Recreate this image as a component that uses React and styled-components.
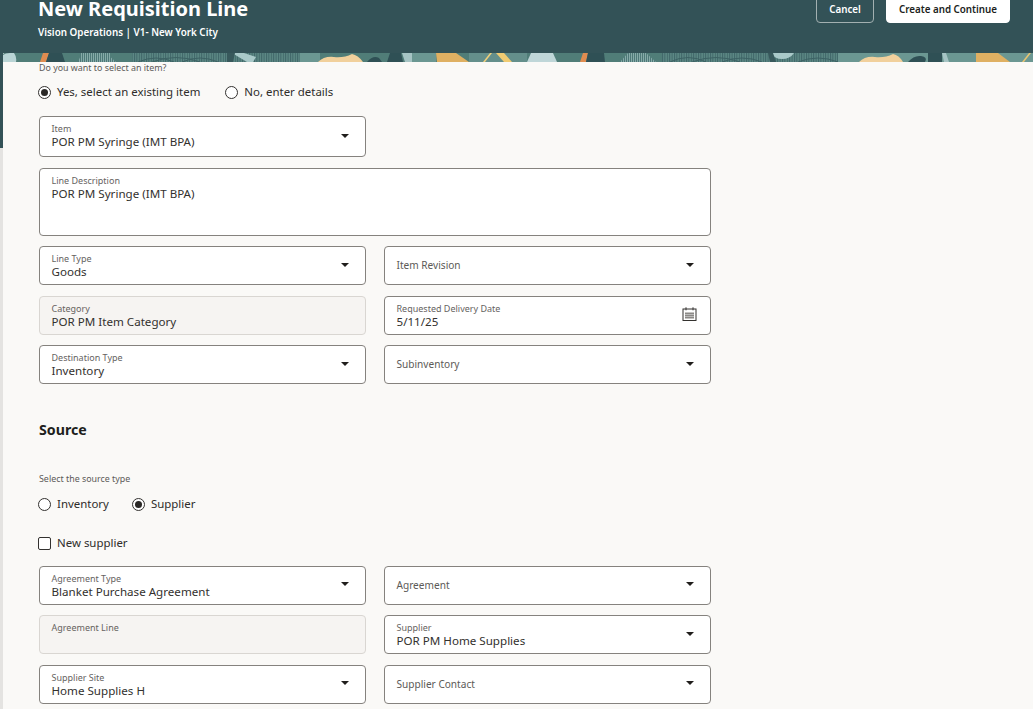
import React from "react";
import styled, { createGlobalStyle } from "styled-components";

const Global = createGlobalStyle`
  html, body { margin: 0; padding: 0; height: 100%; overflow: hidden; background: #e4e3e1; }
  #root { height: 709px; overflow: hidden; }
  * { box-sizing: border-box; }
`;

const FONT = `"Noto Sans", "Open Sans", "Liberation Sans", sans-serif`;

const Page = styled.div`
  position: relative;
  width: 1033px;
  height: 709px;
  overflow: hidden;
  font-family: ${FONT};
  color: #201e1c;
`;

const Hero = styled.header`
  height: 53px;
  background: #335257;
  color: #fff;
  display: flex;
  justify-content: space-between;
  align-items: flex-start;
  padding: 0 23px 0 38px;
  overflow: hidden;
`;

const TitleBlock = styled.div`
  margin-top: -6px;
`;

const Title = styled.h1`
  margin: 0;
  font-size: 20px;
  line-height: 30px;
  font-weight: 700;
`;

const Subtitle = styled.div`
  font-size: 9.85px;
  line-height: 14px;
  font-weight: 600;
  margin-top: 1px;
`;

const Actions = styled.div`
  display: flex;
  gap: 12px;
  margin-top: -4px;
`;

const HeroButton = styled.button`
  height: 27px;
  padding: 0;
  width: ${(p) => p.$w}px;
  border-radius: 4px;
  font-family: ${FONT};
  font-size: 9.8px;
  font-weight: 600;
  border: 1px solid ${(p) => (p.$primary ? "#fff" : "#a3b0b1")};
  background: ${(p) => (p.$primary ? "#fff" : "transparent")};
  color: ${(p) => (p.$primary ? "#201e1c" : "#fff")};
`;

const Body = styled.div`
  display: flex;
  height: 656px;
`;

const Rail = styled.div`
  width: 3px;
  flex: none;
  background: linear-gradient(to bottom, #335257 0, #335257 95px, #e4e3e1 95px);
`;

const Main = styled.main`
  flex: 1;
  min-width: 0;
  background: #faf9f7;
  overflow: hidden;
`;

const StripWrap = styled.div`
  height: 9px;
  margin-left: -1px;
  line-height: 0;
  border-top-left-radius: 4px;
  overflow: hidden;
  background: #5c8a84;
`;

const Form = styled.div`
  padding: 0 0 0 36px;
  width: 708px;
`;

const SmallLabel = styled.div`
  font-size: 8.9px;
  line-height: 12px;
  color: #5c5a57;
  margin-top: ${(p) => p.$top || 0}px;
`;

const RadioRow = styled.div`
  display: flex;
  gap: ${(p) => p.$gap}px;
  margin-top: ${(p) => p.$top}px;
`;

const Choice = styled.label`
  display: flex;
  align-items: center;
  gap: 6px;
  font-size: 11.45px;
  line-height: 18px;
  height: 18px;
  color: #2f2d2b;
`;

const RadioMark = styled.span`
  width: 13px;
  height: 13px;
  margin-left: -1px;
  flex: none;
  border-radius: 50%;
  border: 1px solid #33312f;
  background: #fff;
  display: flex;
  align-items: center;
  justify-content: center;
  &::after {
    content: "";
    width: 7px;
    height: 7px;
    border-radius: 50%;
    background: ${(p) => (p.$on ? "#2a2826" : "transparent")};
  }
`;

const CheckMark = styled.span`
  width: 13px;
  height: 13px;
  margin-left: -1px;
  flex: none;
  border-radius: 2px;
  border: 1px solid #33312f;
  background: #fff;
`;

const Grid = styled.div`
  display: grid;
  grid-template-columns: 327px 327px;
  column-gap: 18px;
  row-gap: 10.5px;
  margin-top: ${(p) => p.$top}px;
`;

const Field = styled.div`
  grid-column: ${(p) => (p.$wide ? "1 / -1" : "auto")};
  position: relative;
  height: ${(p) => p.$h || 39}px;
  border-radius: 4px;
  border: 1px solid ${(p) => (p.$disabled ? "#d9d6d2" : "#85827e")};
  background: ${(p) => (p.$disabled ? "#f6f4f2" : "#fff")};
  padding: 6px 40px 0 11.5px;
`;

const FieldLabel = styled.div`
  font-size: 9px;
  line-height: 11px;
  color: #66635f;
`;

const EmptyLabel = styled.div`
  font-size: 10.1px;
  line-height: 37px;
  margin-top: -6px;
  color: #5c5a57;
`;

const FieldValue = styled.div`
  font-size: 11.6px;
  line-height: 15px;
  color: #33312e;
  white-space: nowrap;
`;

const FieldIcon = styled.span`
  position: absolute;
  right: ${(p) => p.$right || 16}px;
  top: 50%;
  transform: translateY(-50%);
  display: flex;
  margin-top: ${(p) => p.$dy || -1}px;
`;

const SectionTitle = styled.h2`
  margin: 36px 0 0;
  font-size: 14.2px;
  line-height: 20px;
  font-weight: 700;
  color: #201e1c;
`;

const Caret = () => (
  <FieldIcon>
    <svg width="8" height="4" viewBox="0 0 8 4">
      <path d="M0 0h8L4 4z" fill="#201e1c" />
    </svg>
  </FieldIcon>
);

const Calendar = () => (
  <FieldIcon $dy={0} $right={13}>
    <svg width="15" height="15" viewBox="0 0 15 15" fill="none">
      <rect x="1" y="2.5" width="13" height="11.5" stroke="#33312e" />
      <path d="M4 .8v3M11 .8v3" stroke="#33312e" />
      <rect x="3" y="6" width="9" height="6" fill="#8b8986" />
      <path d="M3 8h9M3 10h9" stroke="#ddd" strokeWidth=".6" />
    </svg>
  </FieldIcon>
);

function Select({ label, value, h, wide }) {
  return (
    <Field $h={h} $wide={wide}>
      {value ? (
        <>
          <FieldLabel>{label}</FieldLabel>
          <FieldValue>{value}</FieldValue>
        </>
      ) : (
        <EmptyLabel>{label}</EmptyLabel>
      )}
      <Caret />
    </Field>
  );
}

function Strip() {
  return (
    <svg width="1031" height="9" viewBox="0 0 1031 9" preserveAspectRatio="none">
      <defs>
        <pattern id="hatch" width="2.4" height="3" patternUnits="userSpaceOnUse">
          <rect width="2.4" height="3" fill="#5d8985" />
          <rect width="1" height="3" fill="#3f6668" />
        </pattern>
        <pattern id="hatchLight" width="2" height="3" patternUnits="userSpaceOnUse">
          <rect width="2" height="3" fill="#86aaa8" />
          <rect width="1" height="3" fill="#4d7877" />
        </pattern>
      </defs>
      <rect width="1031" height="9" fill="#507d78" />
      <path d="M0 9V3Q2 0 8 0h4q3 4 2 9z" fill="#b9d4d5" />
      <path d="M38 9 41 0h6l-3 9z" fill="#e08c50" />
      <path d="M47 0h13l3 9H44z" fill="#2f5055" />
      <rect x="78" width="30" height="9" fill="url(#hatchLight)" />
      <path d="M80 0h24l10 9H76z" fill="url(#hatchLight)" />
      <rect x="130" width="168" height="9" fill="url(#hatch)" />
      <path d="M136 9q18-8 36 0M150 9q24-9 48 0M180 9q18-8 36 0" fill="none" stroke="#3d6264" strokeWidth="1" />
      <path d="M230 0h12l12 4-3 5h-6z" fill="#a9c9c9" />
      <path d="M225 0h8l-2 9h-6z" fill="#38595c" />
      <rect x="298" width="20" height="9" fill="#6b9792" />
      <path d="M316 9q6-6 16-5t18-3q6 1 11 8z" fill="#f1d09c" />
      <path d="M365 9q6-7 12-4l3 4z" fill="#2f5055" />
      <path d="M385 9l3-9h11l2 9z" fill="#2f5055" />
      <path d="M400 0h10v9h-7z" fill="#a6c4c4" />
      <rect x="410" width="24" height="9" fill="#6b9792" />
      <path d="M434 0h20l13 9h-32z" fill="#dfb062" />
      <path d="M467 0h58v9h-58z" fill="#648f8b" />
      <path d="M481 9l7-9h2l-7 9z" fill="#f0cf7a" />
      <path d="M494 0h8l8 9h-8z" fill="#f0cb72" />
      <path d="M525 9l4-9h22l4 9z" fill="#bfd6d8" />
      <path d="M578 9l3-9h5l-2 9z" fill="#e08c50" />
      <path d="M586 0h16l1 9h-19z" fill="#2f5055" />
      <path d="M618 9l8-9h18l10 9z" fill="url(#hatchLight)" />
      <rect x="660" width="176" height="9" fill="url(#hatch)" />
      <path d="M668 9q18-9 36 0M690 9q24-9 48 0M720 9q20-8 40 0M796 9q20-8 40 0" fill="none" stroke="#3d6264" />
      <path d="M770 0h22q-4 6-12 6t-10-6z" fill="#a9c9c9" />
      <path d="M766 0h5l3 9h-6z" fill="#38595c" />
      <rect x="836" width="195" height="9" fill="#6b9792" />
      <path d="M857 9q6-6 16-5t18-3q6 1 10 8z" fill="#f1d09c" />
      <path d="M906 9q6-7 13-6t4 6z" fill="#2f5055" />
      <path d="M926 0h14v9h-14z" fill="#2f5055" />
      <path d="M940 0h4l3 9h-5z" fill="#a6c4c4" />
      <path d="M974 0h22l12 9h-34z" fill="#dfb062" />
      <path d="M1020 9l7-9h2l-7 9z" fill="#e8c470" />
    </svg>
  );
}

export default function App() {
  return (
    <Page>
      <Global />
      <Hero>
        <TitleBlock>
          <Title>New Requisition Line</Title>
          <Subtitle>Vision Operations | V1- New York City</Subtitle>
        </TitleBlock>
        <Actions>
          <HeroButton $w={58}>Cancel</HeroButton>
          <HeroButton $w={124} $primary>Create and Continue</HeroButton>
        </Actions>
      </Hero>
      <Body>
        <Rail />
        <Main>
          <StripWrap>
            <Strip />
          </StripWrap>
          <Form>
            <SmallLabel>Do you want to select an item?</SmallLabel>
            <RadioRow $gap={26} $top={9}>
              <Choice><RadioMark $on />Yes, select an existing item</Choice>
              <Choice><RadioMark />No, enter details</Choice>
            </RadioRow>
            <Grid $top={15}>
              <Select label="Item" value="POR PM Syringe (IMT BPA)" h={41} />
              <div />
              <Field $wide $h={68}>
                <FieldLabel>Line Description</FieldLabel>
                <FieldValue>POR PM Syringe (IMT BPA)</FieldValue>
              </Field>
              <Select label="Line Type" value="Goods" />
              <Select label="Item Revision" />
              <Field $disabled>
                <FieldLabel>Category</FieldLabel>
                <FieldValue>POR PM Item Category</FieldValue>
              </Field>
              <Field>
                <FieldLabel>Requested Delivery Date</FieldLabel>
                <FieldValue>5/11/25</FieldValue>
                <Calendar />
              </Field>
              <Select label="Destination Type" value="Inventory" />
              <Select label="Subinventory" />
            </Grid>
            <SectionTitle>Source</SectionTitle>
            <SmallLabel $top={33}>Select the source type</SmallLabel>
            <RadioRow $gap={24} $top={10}>
              <Choice><RadioMark />Inventory</Choice>
              <Choice><RadioMark $on />Supplier</Choice>
            </RadioRow>
            <RadioRow $gap={0} $top={21}>
              <Choice><CheckMark />New supplier</Choice>
            </RadioRow>
            <Grid $top={13.5}>
              <Select label="Agreement Type" value="Blanket Purchase Agreement" />
              <Select label="Agreement" />
              <Field $disabled>
                <FieldLabel>Agreement Line</FieldLabel>
              </Field>
              <Select label="Supplier" value="POR PM Home Supplies" />
              <Select label="Supplier Site" value="Home Supplies H" />
              <Select label="Supplier Contact" />
            </Grid>
          </Form>
        </Main>
      </Body>
    </Page>
  );
}
